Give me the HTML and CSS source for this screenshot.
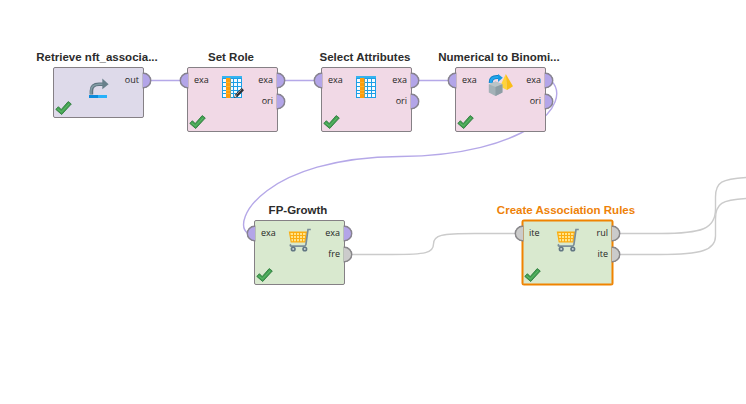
FILE: index.html
```html
<!DOCTYPE html>
<html lang="en">
<head>
<meta charset="utf-8">
<title>Process</title>
<link rel="stylesheet" href="styles.css">
</head>
<body>
<svg class="defs" width="0" height="0" aria-hidden="true">
  <symbol id="check" viewBox="0 0 17 14"><path d="M.8 8.400 3.400 5.700 6.200 8.600 13.200 .6 16.300 3 6.700 13.500Z" fill="#43a352" stroke="#2f7a3e" stroke-width=".9"/><path d="M2.500 8 6.500 11 14.200 2.800" fill="none" stroke="#66bd70" stroke-width=".8"/></symbol>
  <symbol id="retrieve" viewBox="0 0 20 20"><path d="M2.400 16.500V13Q2.400 6.300 10 6.300H14" fill="none" stroke="#5f7480" stroke-width="3.600"/><path d="M2 16V13Q2 6.600 10 6.200H14" fill="none" stroke="#839da6" stroke-width="1.500"/><path d="M13.300 .6 19.600 6.200 13.300 11.300Z" fill="#68808b"/><path d="M0 17H9V20H0Z" fill="#0b8bdd"/><path d="M9 17H18V20H9Z" fill="#27b1fa"/></symbol>
  <symbol id="table" viewBox="0 0 20 22"><path d="M0 0H20V22H0Z" fill="#1c9fe6"/><path d="M0 0H20V2H0Z" fill="#35b3ef"/><path d="M1 3H4V6H1ZM1 7H4V10H1ZM1 11H4V14H1ZM1 15H4V17H1ZM1 18H4V21H1ZM9 3H11V6H9ZM12 3H15V6H12ZM16 3H19V6H16ZM9 7H11V10H9ZM12 7H15V10H12ZM16 7H19V10H16ZM9 11H11V14H9ZM12 11H15V14H12ZM16 11H19V14H16ZM9 15H11V17H9ZM12 15H15V17H12ZM16 15H19V17H16ZM9 18H11V21H9ZM12 18H15V21H12ZM16 18H19V21H16Z" fill="#f5fbff"/><path d="M4 2H8.500V22H4Z" fill="#ff9d0a"/><path d="M4 6.500H8.500M4 10.500H8.500M4 14.500H8.500M4 17.500H8.500" stroke="#ffb735" stroke-width=".8"/></symbol>
  <symbol id="convert" viewBox="0 0 26 22"><path d="M2.800 9V8Q3 3.200 9 3.100H11" fill="none" stroke="#0c7fc4" stroke-width="4"/><path d="M2.800 9V8Q3 3.200 9 3.100H11" fill="none" stroke="#22a7ee" stroke-width="2.400"/><path d="M10 0 14.800 3.800 10 8Z" fill="#149ae3"/><path d="M17.800 0 12 12.500 19 16Z" fill="#ffd33b"/><path d="M17.800 0 25 12.300 19 16Z" fill="#f9bd18"/><path d="M.8 10.200 7.500 7.500 14.400 10.200V18.500L7.500 22 .8 18.500Z" fill="#a3b1b7"/><path d="M.8 10.200 7.500 7.500 14.400 10.200 7.500 13Z" fill="#b9c4c8"/><path d="M7.500 13 14.400 10.200V18.500L7.500 22Z" fill="#8d9da4"/></symbol>
  <symbol id="cart" viewBox="0 0 24 24"><path d="M.8 3.500H19.200L17.500 14.500H2.700Z" fill="#fbad10"/><path d="M2.400 5H5V7H2.700ZM6 5H8V7H6ZM9 5H11V7H9ZM12 5H14V7H12ZM15 5H17.500V7H15ZM2.800 8H5V10H3.100ZM6 8H8V10H6ZM9 8H11V10H9ZM12 8H14V10H12ZM15 8H17V10H15ZM3.400 11H5V13.200H3.600ZM6 11H8V13.200H6ZM9 11H11V13.200H9ZM12 11H14V13.200H12ZM15 11H16.600V13.200H15Z" fill="#ffe48b"/><path d="M22.800 1.500H20L17.900 16.600Q17.500 18.200 15.500 18.200H3.500Q1.600 18 2.800 16.200" fill="none" stroke="#7b8e99" stroke-width="1.700"/><circle cx="5.200" cy="21" r="2.600" fill="#627783"/><circle cx="16.800" cy="21" r="2.600" fill="#627783"/><circle cx="5.200" cy="21" r="1" fill="#cbd5da"/><circle cx="16.800" cy="21" r="1" fill="#cbd5da"/></symbol>
</svg>
<main class="canvas">
  <svg class="wires" width="746" height="404">
    <path d="M150 80.500H181M284 80.500H315M418 80.500H449"/>
    <path d="M551 80.500C574 103 528 155.500 400 156.500C266 157.500 230 221 248 233.500"/>
    <g class="grey">
      <path d="M351 254.500H392C426 254.500 433.500 253 433.500 244C433.500 235 441 233.500 475 233.500H516"/>
      <path d="M619 233.500H660C702 233.500 715.500 229 715.500 209V197C715.500 182 722 179 746 177.500"/>
      <path d="M619 254.500H660C702 254.500 715.500 250 715.500 236V219C715.500 203 722 200 746 198.500"/>
    </g>
  </svg>

  <section class="node lilac retrieve">
    <h2>Retrieve nft_associa...</h2>
    <div class="ports out"><span>out</span></div>
    <svg class="icon" width="20" height="20"><use href="#retrieve"/></svg>
    <svg class="check" width="17" height="14"><use href="#check"/></svg>
  </section>
  <section class="node pink role">
    <h2>Set Role</h2>
    <div class="ports in"><span>exa</span></div>
    <div class="ports out"><span>exa</span><span>ori</span></div>
    <svg class="icon" width="20" height="22"><use href="#table"/></svg>
    <svg class="pencil" width="10" height="10" viewBox="0 0 10 10"><path d="M0 10 1.200 6.500 7.700 0 10 2.200 3.500 8.700Z" fill="#303036"/><path d="M2.500 6.500 7.500 1.500" stroke="#8d8d92"/><path d="M1 8.800 2.300 7.500" stroke="#f2e4d8" stroke-width="1.200"/></svg>
    <svg class="check" width="17" height="14"><use href="#check"/></svg>
  </section>
  <section class="node pink select">
    <h2>Select Attributes</h2>
    <div class="ports in"><span>exa</span></div>
    <div class="ports out"><span>exa</span><span>ori</span></div>
    <svg class="icon" width="20" height="22"><use href="#table"/></svg>
    <svg class="check" width="17" height="14"><use href="#check"/></svg>
  </section>
  <section class="node pink binominal">
    <h2>Numerical to Binomi...</h2>
    <div class="ports in"><span>exa</span></div>
    <div class="ports out"><span>exa</span><span>ori</span></div>
    <svg class="icon" width="26" height="22"><use href="#convert"/></svg>
    <svg class="check" width="17" height="14"><use href="#check"/></svg>
  </section>
  <section class="node green growth">
    <h2>FP-Growth</h2>
    <div class="ports in"><span>exa</span></div>
    <div class="ports out"><span>exa</span><span class="neutral">fre</span></div>
    <svg class="icon" width="24" height="24"><use href="#cart"/></svg>
    <svg class="check" width="17" height="14"><use href="#check"/></svg>
  </section>
  <section class="node green rules selected">
    <h2>Create Association Rules</h2>
    <div class="ports in"><span class="neutral">ite</span></div>
    <div class="ports out"><span class="neutral">rul</span><span class="neutral">ite</span></div>
    <svg class="icon" width="24" height="24"><use href="#cart"/></svg>
    <svg class="check" width="17" height="14"><use href="#check"/></svg>
  </section>
</main>
</body>
</html>
```
FILE: styles.css
```css
body { margin: 0; background: #fff; font-family: "Open Sans", "Noto Sans", sans-serif; }
.defs { position: absolute; }
.canvas { position: relative; width: 746px; height: 404px; overflow: hidden; }
.wires { position: absolute; left: 0; top: 0; fill: none; stroke: #b5a8e8; stroke-width: 1.4; }
.grey { stroke: #cbcbcb; }

.node { position: absolute; box-sizing: border-box; width: 91px; height: 65px; border: 1px solid #858085; border-radius: 2px; }
.lilac { background: #dedaea; }
.pink { background: #f1d9e6; }
.green { background: #d9e9cf; }
.retrieve { left: 53px; top: 67px; height: 51px; }
.role { left: 187px; top: 67px; }
.select { left: 321px; top: 67px; }
.binominal { left: 455px; top: 67px; }
.growth { left: 254px; top: 220px; }
.rules { left: 522px; top: 220px; }
.selected { border-color: #f08300; box-shadow: inset 0 0 0 .5px #f08300, 0 0 0 .5px #f08300; }

h2 { position: absolute; left: 43px; top: -19px; margin: 0; transform: translateX(-50%); white-space: nowrap; font-family: "Liberation Sans", sans-serif; font-size: 11.5px; line-height: 17px; font-weight: 700; color: #2c2c2c; }
.selected h2 { color: #ee8208; }

.ports { position: absolute; top: 2px; font-size: 9px; line-height: 19px; color: #252525; }
.ports span { display: block; position: relative; height: 21px; }
.in { left: 6px; }
.out { right: 4px; text-align: right; }
.ports span::after { content: ""; position: absolute; top: 3px; box-sizing: border-box; width: 8px; height: 15px; border: 1.5px solid #85818c; background: #b3a5e8; box-shadow: 0 0 0 .4px #85818c; }
.in span::after { left: -14px; border-right: 0; border-radius: 8px 0 0 8px; }
.out span::after { right: -12px; border-left: 0; border-radius: 0 8px 8px 0; }
.ports .neutral::after { background: #cbcbcb; border-color: #858585; }

.icon { position: absolute; left: 34px; top: 8px; }
.retrieve .icon { left: 35px; top: 10px; }
.binominal .icon { left: 32px; top: 6px; }
.green .icon { left: 33px; top: 7px; }
.pencil { position: absolute; left: 46px; top: 20px; }
.check { position: absolute; left: 1px; bottom: 2px; }
```
